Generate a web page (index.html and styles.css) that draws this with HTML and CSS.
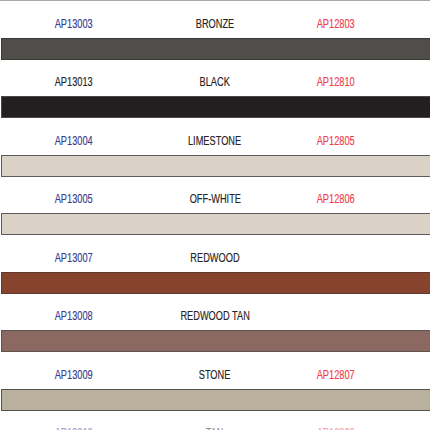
FILE: index.html
```html
<!DOCTYPE html>
<html>
<head>
<meta charset="utf-8">
<link rel="stylesheet" href="styles.css">
</head>
<body>
<div class="chart">
  <div class="item">
    <div class="labels"><span class="code blue">AP13003</span><span class="name">BRONZE</span><span class="code red">AP12803</span></div>
    <div class="bar bronze"></div>
  </div>
  <div class="item">
    <div class="labels"><span class="code dark">AP13013</span><span class="name">BLACK</span><span class="code red">AP12810</span></div>
    <div class="bar black"></div>
  </div>
  <div class="item">
    <div class="labels"><span class="code blue">AP13004</span><span class="name">LIMESTONE</span><span class="code red">AP12805</span></div>
    <div class="bar limestone"></div>
  </div>
  <div class="item">
    <div class="labels"><span class="code blue">AP13005</span><span class="name">OFF-WHITE</span><span class="code red">AP12806</span></div>
    <div class="bar offwhite"></div>
  </div>
  <div class="item">
    <div class="labels"><span class="code blue">AP13007</span><span class="name">REDWOOD</span><span class="code red"></span></div>
    <div class="bar redwood"></div>
  </div>
  <div class="item">
    <div class="labels"><span class="code blue">AP13008</span><span class="name">REDWOOD TAN</span><span class="code red"></span></div>
    <div class="bar redwoodtan"></div>
  </div>
  <div class="item">
    <div class="labels"><span class="code blue">AP13009</span><span class="name">STONE</span><span class="code red">AP12807</span></div>
    <div class="bar stone"></div>
  </div>
  <div class="item">
    <div class="labels faint"><span class="code blue">AP13010</span><span class="name">TAN</span><span class="code red">AP12808</span></div>
    <div class="bar tan"></div>
  </div>
</div>
</body>
</html>
```
FILE: styles.css
```css
html, body {
  margin: 0;
  padding: 0;
  background: #ffffff;
  overflow: hidden;
}
.chart {
  border-top: 1px solid #a8a8a8;
  width: 440px;
  font-family: "Liberation Sans", Arial, sans-serif;
  font-size: 12px;
}
.item {
  display: flex;
  flex-direction: column;
}
.labels {
  height: 36.5px;
  box-sizing: border-box;
  padding-bottom: 8px;
  display: grid;
  grid-template-columns: 148px 134px 108px;
  align-items: end;
  justify-items: center;
  line-height: 12px;
}
.labels span {
  display: inline-block;
  white-space: nowrap;
  transform: scaleX(0.77);
  -webkit-text-stroke: 0.15px currentColor;
}
.code.blue { color: #3a3d8d; }
.code.red { color: #ef3e4c; }
.code.dark { color: #262324; }
.name { color: #262324; }
.faint { opacity: 0.5; }
.bar {
  height: 22px;
  box-sizing: border-box;
  margin-left: 1px;
  border: 1.5px solid #555350;
  border-right: none;
}
.bronze { background: #504e4a; border-color: #3c3a37; }
.black { background: #231f20; border-color: #4a4849; }
.limestone { background: #dad2c6; border-color: #5d5b59; }
.offwhite { background: #dad2c6; border-color: #5d5b59; }
.redwood { background: #86432d; border-color: #5e3a2c; }
.redwoodtan { background: #8b6962; border-color: #5f5350; }
.stone { background: #bab09e; border-color: #55534f; }
.tan { background: #c8b48e; border-color: #55534f; }
```
